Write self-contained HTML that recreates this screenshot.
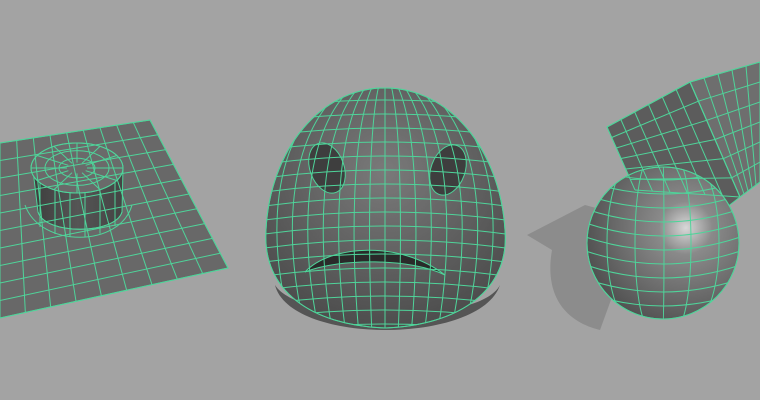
<!DOCTYPE html>
<html><head><meta charset="utf-8"><style>
html,body{margin:0;padding:0;background:#a3a3a3;width:760px;height:400px;overflow:hidden}
svg{display:block}
</style></head><body>
<svg id="s" width="760" height="400" viewBox="0 0 760 400" xmlns="http://www.w3.org/2000/svg">
<defs>
<radialGradient id="sph" cx="0.65" cy="0.4" r="0.7">
<stop offset="0" stop-color="#d8d8d8"/><stop offset="0.25" stop-color="#8a8a8a"/><stop offset="1" stop-color="#4e4e4e"/></radialGradient>
<radialGradient id="hd" cx="0.5" cy="0.35" r="0.7">
<stop offset="0" stop-color="#7a7a7a"/><stop offset="1" stop-color="#4a4a4a"/></radialGradient>
<linearGradient id="cyl" x1="0" x2="1"><stop offset="0" stop-color="#3e3e3e"/><stop offset="0.5" stop-color="#555"/><stop offset="1" stop-color="#444"/></linearGradient>
<clipPath id="headc"><path d="M385,88 C450,88 500,150 505,230 C510,290 460,325 385,328 C310,325 262,290 266,230 C270,150 320,88 385,88Z"/></clipPath>
<clipPath id="sphc"><circle cx="663" cy="243" r="76"/></clipPath>
</defs>
<g id="g" fill="none" stroke="#4fd49a" stroke-width="1">
<path d="M275,285 C290,345 480,345 500,285 C480,325 300,325 275,285Z" fill="#555" stroke="none"/>
<path d="M527,235 L585,205 L640,220 L600,330 C560,320 545,290 552,250Z" fill="#8c8c8c" stroke="none"/>
<polygon points="0,143 150,120 228,268 0,318" fill="#686868"/>
<path d="M33,170 L38,212 C45,235 115,235 122,212 L123,168Z" fill="url(#cyl)"/>
<ellipse cx="77" cy="168" rx="46" ry="25" fill="#6a6a6a"/>
<path d="M385,88 C450,88 500,150 505,230 C510,290 460,325 385,328 C310,325 262,290 266,230 C270,150 320,88 385,88Z" fill="url(#hd)"/>
<ellipse cx="327" cy="168" rx="17" ry="26" fill="#3e3e3e" transform="rotate(-20 327 168)"/>
<ellipse cx="448" cy="170" rx="17" ry="26" fill="#3e3e3e" transform="rotate(20 448 170)"/>
<path d="M305,272 C330,245 400,240 445,275 C410,258 340,258 305,272Z" fill="#2a2a2a"/>
<polygon points="690,82 760,62 760,182 740,197" fill="#6e6e6e"/>
<polygon points="607,127 690,82 740,197 713,218 635,190" fill="#5c5c5c"/>
<circle cx="663" cy="243" r="76" fill="url(#sph)"/>
</g>
</svg>
<script>
var g=document.getElementById('g'),NS='http://www.w3.org/2000/svg';
function L(d,clip){var p=document.createElementNS(NS,'path');p.setAttribute('d',d);if(clip)p.setAttribute('clip-path','url(#'+clip+')');g.appendChild(p);}
function lerp(a,b,t){return[a[0]+(b[0]-a[0])*t,a[1]+(b[1]-a[1])*t];}
function quad(A,B,C,D,nu,nv){
 for(var i=0;i<=nu;i++){var t=i/nu,p=lerp(A,B,t),q=lerp(D,C,t);L('M'+p+' L'+q);}
 for(var j=0;j<=nv;j++){var t=j/nv,p=lerp(A,D,t),q=lerp(B,C,t);L('M'+p+' L'+q);}
}
quad([0,143],[150,120],[228,268],[0,318],9,10);
[46,32,18].forEach(function(r){L('M'+(77-r)+',168 a'+r+','+(r*25/46)+' 0 1,0 '+(2*r)+',0 a'+r+','+(r*25/46)+' 0 1,0 '+(-2*r)+',0');});
for(var k=0;k<12;k++){var a=k*Math.PI/6;L('M'+(77+10*Math.cos(a))+','+(168+5.4*Math.sin(a))+' L'+(77+46*Math.cos(a))+','+(168+25*Math.sin(a)));}
[40,55,70,85,100,115].forEach(function(x){var dy=25*Math.sqrt(Math.max(0,1-Math.pow((x-77)/46,2)));L('M'+x+','+(168+dy)+' L'+x+','+(212+dy));});
L('M38,212 C45,235 115,235 122,212');
L('M25,205 C40,248 120,248 132,205');
for(var i=-8;i<=8;i++){L('M'+(385+i*6)+',85 C'+(385+i*17)+',130 '+(385+i*17)+',250 '+(385+i*13)+',335','headc');}
for(var j=0;j<17;j++){var y=100+j*14;L('M250,'+(y+10)+' Q385,'+(y-10)+' 520,'+(y+10),'headc');}
L('M385,88 C450,88 500,150 505,230 C510,290 460,325 385,328 C310,325 262,290 266,230 C270,150 320,88 385,88Z');
quad([607,127],[690,82],[740,197],[635,190],6,6);
quad([690,82],[760,62],[760,182],[740,197],5,6);
for(var i=-5;i<=5;i++){var rx=Math.abs(i)*14;L('M'+(663+(i<0?-rx:rx))+',160 A'+(rx||1)+',83 0 0,'+(i<0?0:1)+' '+(663+(i<0?-rx:rx))+',326','sphc');}
for(var j=-5;j<=5;j++){var y=243+j*14;L('M580,'+(y-8)+' Q663,'+(y+22)+' 746,'+(y-8),'sphc');}
L('M739,243 A76,76 0 1,1 739,242.9');
</script>
</body></html>
